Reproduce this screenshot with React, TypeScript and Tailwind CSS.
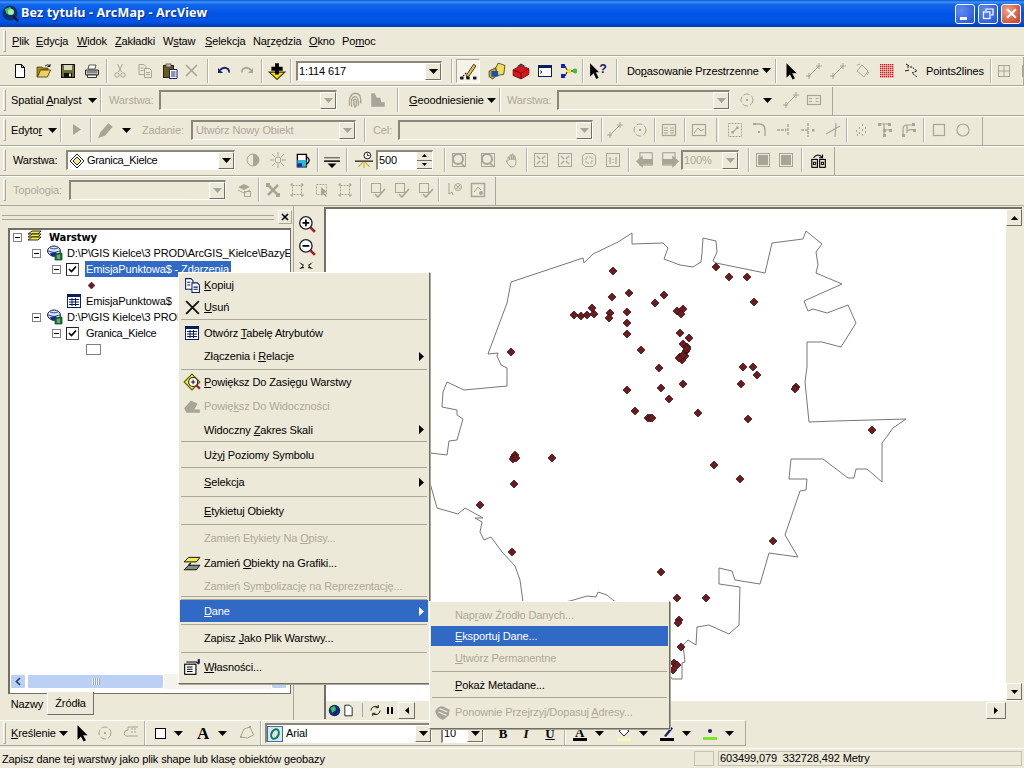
import type { ReactNode } from 'react';
import clsx from 'clsx';

const G = '#a8a596';

function Ic({ children, className }: { children: ReactNode; className?: string }) {
  return (
    <svg viewBox="0 0 16 16" fill="none" className={clsx('w-4 h-4 shrink-0', className)}>
      {children}
    </svg>
  );
}

function B({ children, className }: { children?: ReactNode; className?: string }) {
  return <div className={clsx('w-6 h-6 shrink-0 flex items-center justify-center', className)}>{children}</div>;
}

function Sep({ className }: { className?: string }) {
  return <div className={clsx('w-[2px] h-6 shrink-0 border-l border-[#b5b2a4] border-r-white border-r', className)} />;
}

function Grip() {
  return <div className="w-[3px] h-[22px] ml-[3px] shrink-0 border-l border-t border-white border-r border-b border-r-[#aca899] border-b-[#aca899]" />;
}

function Caret({ className, gray }: { className?: string; gray?: boolean }) {
  return (
    <svg viewBox="0 0 9 5" className={clsx('w-[9px] h-[5px] shrink-0', className)}>
      <polygon points="0,0 9,0 4.5,5" fill={gray ? G : '#000'} />
    </svg>
  );
}

function Combo({ className, disabled, children }: { className: string; disabled?: boolean; children?: ReactNode }) {
  return (
    <div
      className={clsx(
        'h-5 shrink-0 flex items-center border-t-2 border-l-2 border-t-[#8a8778] border-l-[#8a8778] border-b border-r border-b-white border-r-white',
        disabled ? 'bg-[#ece9d8]' : 'bg-white',
        className,
      )}
    >
      <div className="flex-1 min-w-0 flex items-center whitespace-nowrap">{children}</div>
      <div className="w-4 h-[17px] shrink-0 flex items-center justify-center bg-[#ece9d8] border-t border-l border-white border-r border-b border-r-[#716f64] border-b-[#716f64]">
        <Caret className="w-[7px] h-1" gray={disabled} />
      </div>
    </div>
  );
}

/* ---- icons ---- */
const IconNew = () => <Ic><path d="M3.5 1.5h6l3 3v10h-9z" fill="#fff" stroke="#000" /><path d="M9.5 1.5v3h3" stroke="#000" /></Ic>;
const IconOpen = () => <Ic><path d="M1 4h5l1 1h5v2H5l-3 7H1z" fill="#a88a1c" stroke="#3d3200" strokeWidth=".7" /><path d="M1.5 14l3-7h10l-3 7z" fill="#f0d060" stroke="#3d3200" strokeWidth=".8" /><path d="M9 3q2.5-2.5 5 0M14 1v2.5h-2.5" stroke="#1d1d1d" /></Ic>;
const IconSave = () => <Ic><rect x="1.5" y="1.5" width="13" height="13" fill="#70702c" stroke="#111" /><rect x="4" y="2" width="8" height="5" fill="#d8d8c8" /><rect x="4" y="10" width="8" height="4" fill="#111" /><rect x="9" y="10.5" width="2" height="3" fill="#ddd" /></Ic>;
const IconPrint = () => <Ic><path d="M4 6l1-4h7l-1 4z" fill="#fff" stroke="#333" strokeWidth=".8" /><path d="M1.5 7h13v5h-13z" fill="#bbb" stroke="#333" /><path d="M3.5 12h9v2.5h-9z" fill="#fff" stroke="#333" /><path d="M3 9h10" stroke="#555" /></Ic>;
const IconCut = () => <Ic><path d="M5.5 1l4 8M10.5 1l-4 8" stroke={G} /><circle cx="5" cy="12" r="2.2" stroke={G} /><circle cx="11" cy="12" r="2.2" stroke={G} /></Ic>;
const IconCopy = () => <Ic><path d="M2 1.5h5l2 2v8H2z" stroke={G} /><path d="M7.5 5.5h5l2 2v7h-7z" fill="#ece9d8" stroke={G} /><path d="M3.5 5h3M3.5 7.5h3M9 9.5h4M9 11.5h4" stroke={G} /></Ic>;
const IconPaste = () => <Ic><rect x="1.5" y="2.5" width="10" height="12" fill="#6d5a20" stroke="#2d2500" /><rect x="4" y="1" width="5" height="3" fill="#c9c7b9" stroke="#333" strokeWidth=".7" /><path d="M7.5 6.5h7.5v9H7.5z" fill="#fff" stroke="#17206b" /><path d="M9 9h4.5M9 11h4.5M9 13h4.5" stroke="#17206b" /></Ic>;
const IconDelete = () => <Ic><path d="M2 2l11 11M13 2L2 13" stroke={G} strokeWidth="1.6" /></Ic>;
const IconUndo = () => <Ic><path d="M4 7q4-4 8-1 1.5 1.500 1 3.500" stroke="#17206b" strokeWidth="1.8" /><path d="M2 5v5h5z" fill="#17206b" /></Ic>;
const IconRedo = () => <Ic><path d="M12 7Q8 3 4 6 2.500 7.500 3 9.500" stroke={G} strokeWidth="1.800" /><path d="M14 5v5H9z" fill={G} /></Ic>;
const IconAdd = () => <Ic className="w-[18px] h-[18px]"><path d="M8 15.500L1 9h14z" fill="#f4dd1e" stroke="#3d3200" /><path d="M6.300 1h3.400v3.300H13v3.400H9.700V11H6.300V7.700H3V4.300h3.300z" fill="#000" /></Ic>;
const IconEdit = () => <Ic className="w-[18px] h-[18px]"><path d="M7 11l6-9 2 1.500-6 9-2.500 1z" fill="#f4c430" stroke="#111" strokeWidth=".7" /><path d="M2 14.500L7 9" stroke="#111" strokeDasharray="1.500 1" /><rect x="1" y="13" width="3" height="2.500" fill="#111" /><rect x="6.500" y="13" width="3" height="2.500" fill="#111" /><rect x="12.500" y="13" width="3" height="2.500" fill="#111" /></Ic>;
const IconCatalog = () => <Ic className="w-[18px] h-[18px]"><path d="M1 8l6-3 1 7-4 3-3-2z" fill="#c9a91f" stroke="#333" strokeWidth=".7" /><path d="M7 5l2-4 6 2-1 8-6 1z" fill="#f3dd55" stroke="#333" strokeWidth=".7" /><rect x="3" y="8" width="6" height="5" fill="#1b4fb5" /></Ic>;
const IconToolbox = () => <Ic className="w-[18px] h-[18px]"><path d="M1 7l7-4 7 3v5l-7 4-7-3z" fill="#d9141c" stroke="#5d0509" strokeWidth=".7" /><path d="M1 7l7 3 7-4M8 10v5" stroke="#5d0509" strokeWidth=".8" /><path d="M5 4l3-2 3 1.500" stroke="#333" /></Ic>;
const IconCmd = () => <Ic><rect x="1.500" y="2.500" width="13" height="11" fill="#fff" stroke="#0a1e5e" /><rect x="1" y="2" width="14" height="3" fill="#0a1e5e" /><path d="M3 7.500l2 1.500-2 1.500" stroke="#000" strokeWidth=".8" /></Ic>;
const IconModel = () => <Ic><rect x="0" y="1" width="4" height="4" fill="#1420c8" /><rect x="0" y="11" width="4" height="4" fill="#1420c8" /><rect x="6" y="6" width="4" height="4" fill="#f2e21a" /><circle cx="14" cy="8" r="2.400" fill="#38c04a" /><path d="M4 3l2 4M4 13l2-4M10 8h2" stroke="#111" /></Ic>;
const IconHelp = () => <Ic className="w-[18px] h-[18px]"><path d="M1 1v12l3-3 2.500 5 2-1-2.500-5H9z" fill="#000" /><text x="9" y="10" fontSize="11" fontWeight="700" fill="#17206b" fontFamily="Liberation Sans">?</text></Ic>;
const IconArrow = ({ c = '#000' }: { c?: string }) => <Ic className="w-[18px] h-[18px]"><path d="M4 1v13l3-3 2.500 4.500 2-1L9 10h4z" fill={c} /></Ic>;
const IconVertex = () => <Ic><path d="M2 14L13 3" stroke={G} /><path d="M10 3h6M13 0v6M0 13h5M3 10v6" stroke={G} /></Ic>;
const IconRot = () => <Ic><circle cx="8" cy="8" r="6" stroke={G} strokeDasharray="6 2" /><rect x="7" y="7" width="2" height="2" fill={G} /></Ic>;
const IconDiam = () => <Ic><path d="M8 2l6 6-4 6-7-6z" stroke={G} /><path d="M3 2l3-1M13 12l2-3" stroke={G} /></Ic>;
function IconRedGrid() {
  const cells = [1, 3, 5, 7, 9, 11, 13];
  return (
    <Ic>
      {cells.flatMap((x) => cells.map((y) => <rect key={`${x}-${y}`} x={x} y={y} width="1.400" height="1.400" fill="#e0141c" />))}
    </Ic>
  );
}
const IconP2L = () => <Ic><path d="M2 4h5l5 4-5 2 5 4" stroke="#111" strokeDasharray="2 1" /><path d="M1 1l3 2M0 8l4-1" stroke="#111" /></Ic>;
const IconGrid = () => <Ic><rect x="2.500" y="2.500" width="11" height="11" stroke={G} /><path d="M8 3v10M3 8h10" stroke={G} /></Ic>;
const IconFinger = () => <Ic className="w-[18px] h-[18px]"><path d="M3 13Q2 3 8 2q6 0 5 9M5 14Q4 5 8 5q3.500 0 3 8M8 15q-1.500-4-1-7 1-1.500 2 0 .5 3 0 6" stroke={G} strokeWidth="1.200" /></Ic>;
const IconStairs = () => <Ic className="w-[18px] h-[18px]"><path d="M2 14V2h3l2 4h3l1 4h3v4z" fill={G} /></Ic>;
const IconMeasure = () => <Ic><rect x="1.500" y="3.500" width="13" height="9" stroke={G} strokeWidth="1.200" /><path d="M3 6.500h3M3 9.500h3M9.500 6.500h3M9.500 9.500h3" stroke={G} /></Ic>;
const IconTri = () => <Ic><path d="M4 2v11l8-5.500z" fill={G} /></Ic>;
const IconPencil = () => <Ic className="w-[18px] h-[18px]"><path d="M1 15l2-5L10 2l4 3-7 8z" fill={G} /></Ic>;
const IconAttr = () => <Ic><rect x="1.500" y="2.500" width="13" height="11" stroke={G} strokeWidth="1.200" /><path d="M3 6h4M3 8.500h4M3 11h4M9 6h4M9 8.500h4M9 11h4" stroke={G} /></Ic>;
const IconSketch = () => <Ic><rect x="1.500" y="2.500" width="13" height="11" stroke={G} strokeWidth="1.200" /><path d="M3 11l4-5 3 3 3-2" stroke={G} /></Ic>;
const IconScaleBox = () => <Ic><rect x="1.500" y="1.500" width="13" height="13" stroke={G} strokeDasharray="2 1" /><path d="M5 11l6-6M9 5h2v2M5 9v2h2" stroke={G} strokeWidth="1.200" /></Ic>;
const IconCurve = () => <Ic><path d="M2 2h5q6 0 6 6v6" stroke={G} strokeWidth="1.400" /><rect x="1" y="1" width="3" height="2" fill={G} /><rect x="6" y="9" width="2" height="2" fill={G} /></Ic>;
const IconSplit = () => <Ic><path d="M1 8h8M12 2v12" stroke={G} strokeWidth="1.400" strokeDasharray="3 1" /><path d="M9 6l2 2-2 2z" fill={G} /></Ic>;
const IconCross = () => <Ic><path d="M8 1v14M1 8h8" stroke={G} strokeWidth="1.400" strokeDasharray="3 1" /><rect x="12" y="7" width="2.500" height="2.500" fill={G} /></Ic>;
const IconCut2 = () => <Ic><path d="M1 12L15 4M11 1l-1 14" stroke={G} strokeWidth="1.200" /></Ic>;
const IconDots = () => <Ic><path d="M3 9h1M6 6h1M9 3h1M12 6h1M6 11h1M9 8h1M12 10h1M4 13h1M9 13h1" stroke={G} strokeWidth="2" /></Ic>;
const IconNodes = () => <Ic><path d="M2 2h10M7 2v6h6M7 8v6" stroke={G} strokeWidth="1.200" /><rect x="1" y="1" width="3" height="3" fill={G} /><rect x="11" y="1" width="3" height="3" fill={G} /><rect x="6" y="7" width="3" height="3" fill={G} /><rect x="12" y="7" width="3" height="3" fill={G} /><rect x="6" y="12" width="3" height="3" fill={G} /></Ic>;
const IconNodes2 = () => <Ic><path d="M2 14V7q0-4 4-4h4M10 3h3M6 3v8M6 9q3-2 8-1" stroke={G} strokeWidth="1.200" /><rect x="1" y="12" width="3" height="3" fill={G} /><rect x="11" y="1" width="3" height="3" fill={G} /><rect x="12" y="7" width="3" height="3" fill={G} /></Ic>;
const IconSquare = () => <Ic><rect x="2.500" y="2.500" width="11" height="11" stroke={G} strokeWidth="1.200" /></Ic>;
const IconCircle = () => <Ic><circle cx="8" cy="8" r="6" stroke={G} strokeWidth="1.200" /></Ic>;
const IconContrast = () => <Ic><circle cx="8" cy="8" r="6" stroke={G} /><path d="M8 2a6 6 0 010 12z" fill={G} /></Ic>;
const IconSun = () => <Ic><circle cx="8" cy="8" r="3" stroke={G} /><path d="M8 0v4M8 12v4M0 8h4M12 8h4M2 2l3 3M11 11l3 3M14 2l-3 3M5 11l-3 3" stroke={G} /></Ic>;
const IconCup = () => <Ic className="w-[18px] h-[18px]"><path d="M3 3h8v11H3z" fill="#fff" stroke="#000" strokeWidth="1.200" /><path d="M3 8h8v6H3z" fill="#2fb8c8" /><path d="M3 11h4v3H3z" fill="#1420c8" /><path d="M11 5q5 3 0 7" stroke="#000" strokeWidth="1.200" /></Ic>;
const IconLines = () => <Ic className="w-[18px] h-[18px]"><path d="M1 6h14" stroke="#555" /><path d="M1 9h14" stroke="#000" strokeWidth="1.300" /><path d="M4 11h8l-4 4z" fill="#000" /></Ic>;
const IconScale = () => <Ic className="w-[20px] h-[18px]"><path d="M0 9h16" stroke="#000" /><path d="M3 14l4-4M13 14l-4-4M8 10v5" stroke="#c9b82c" /><circle cx="11" cy="4" r="3" fill="#fff" stroke="#000" strokeWidth=".8" /><path d="M11 2v2h2" stroke="#000" strokeWidth=".7" /></Ic>;
const IconZoomBox = () => <Ic><circle cx="7" cy="7" r="5" stroke={G} strokeWidth="2" /><rect x="1.500" y="1.500" width="13" height="13" stroke={G} /><path d="M10 11l4 4" stroke={G} strokeWidth="1.600" /></Ic>;
const IconHand = () => <Ic><path d="M4 9V5l1 0 1 3V3h1l1 5V2h1l1 6V4h1l1 5q0 6-4 6H7Q4 13 2 9z" stroke={G} /></Ic>;
const IconFix = () => <Ic><rect x="1.500" y="1.500" width="13" height="13" stroke={G} /><path d="M4 4l3 3M12 4L9 7M4 12l3-3M12 12L9 9" stroke={G} strokeWidth="1.300" /></Ic>;
const IconFix2 = () => <Ic><rect x="1.500" y="1.500" width="13" height="13" stroke={G} /><path d="M7 7L4 4M9 9l3 3M9 7l3-3M7 9l-3 3" stroke={G} strokeWidth="1.300" /></Ic>;
const IconFix3 = () => <Ic><path d="M4 1.500h8l2.500 2.500v8L12 14.500H4L1.500 12V4z" stroke={G} /><path d="M5 5h6v6H5z" stroke={G} strokeDasharray="2 1" /></Ic>;
const IconOne = () => <Ic><rect x="1.500" y="1.500" width="13" height="13" stroke={G} /><path d="M5 5v7M11 5v7M8 7v1M8 10v1" stroke={G} strokeWidth="1.200" /></Ic>;
const IconBack = () => <Ic className="w-[18px] h-[18px]"><rect x="3.500" y="1.500" width="11" height="11" stroke={G} /><path d="M0 9l6-5v3h9v5H6v3z" fill={G} /></Ic>;
const IconFwd = () => <Ic className="w-[18px] h-[18px]"><rect x="1.500" y="1.500" width="11" height="11" stroke={G} /><path d="M16 9l-6-5v3H1v5h9v3z" fill={G} /></Ic>;
const IconPage = () => <Ic><rect x="1.500" y="1.500" width="13" height="13" stroke={G} /><rect x="3" y="3" width="10" height="10" fill={G} /></Ic>;
const IconBook = () => <Ic className="w-[18px] h-[18px]"><rect x="2.500" y="7.500" width="5" height="7" stroke="#000" /><rect x="9.500" y="7.500" width="5" height="7" stroke="#000" /><rect x="4" y="10" width="2" height="2" stroke="#000" strokeWidth=".8" /><rect x="11" y="10" width="2" height="2" stroke="#000" strokeWidth=".8" /><path d="M4 6q4-5 8 0M12 3v3h-3" stroke="#000" /></Ic>;
const IconTopo = () => <Ic><path d="M2 5l6-3 6 3-6 3z" fill={G} /><path d="M2 8l6 3 6-3" stroke={G} /><rect x="8.500" y="9.500" width="6" height="5" stroke={G} /></Ic>;
const IconTopoA = () => <Ic><path d="M3 3l10 10M13 3L3 13" stroke={G} strokeWidth="2.500" /><rect x="1" y="1" width="4" height="4" fill={G} /><rect x="11" y="11" width="4" height="4" fill={G} /></Ic>;
const IconTopoB = () => <Ic><rect x="3.500" y="3.500" width="9" height="9" stroke={G} strokeDasharray="2 1" /><path d="M1 3h3M12 3h3M1 13h3M12 13h3M3 1v3M13 1v3M3 12v3M13 12v3" stroke={G} /></Ic>;
const IconTopoC = () => <Ic><rect x="2.500" y="2.500" width="10" height="10" stroke={G} strokeDasharray="2 1" /><path d="M7 5v9l2-2 3 3 1-1-3-3 3-1z" fill={G} /></Ic>;
const IconCheckBox = () => <Ic><rect x="1.500" y="1.500" width="9" height="9" stroke={G} /><path d="M5 12l3 3 7-8" stroke={G} strokeWidth="1.600" /></Ic>;
const IconErr = () => <Ic><path d="M2 1v11l3-2 1 3" stroke={G} /><circle cx="11" cy="5" r="3.500" stroke={G} /><path d="M9 3l4 4M13 3L9 7" stroke={G} /></Ic>;
const IconErrBox = () => <Ic><rect x="1.500" y="1.500" width="13" height="13" stroke={G} strokeWidth="1.500" /><path d="M4 10l4-5 3 3" stroke={G} /><circle cx="11" cy="11" r="2" fill={G} /></Ic>;
const IconDraw = () => <Ic><path d="M1.500 12L5 4l6-2 3.500 8-6 3z" stroke={G} /><rect x="1" y="11" width="2" height="2" fill={G} /><rect x="10" y="1" width="2" height="2" fill={G} /></Ic>;
const IconGraph = () => <Ic><path d="M2 9a4 4 0 014-4V2h11v9H7a4 4 0 01-5-2z" stroke={G} /><path d="M9 4h2M12 4h2M9 7h2M12 7h2" stroke={G} /></Ic>;
const IconFontO = () => <Ic><rect x="0.500" y="0.500" width="15" height="15" fill="#d7e5f6" stroke="#3a6ea5" /><ellipse cx="8" cy="8" rx="3.500" ry="5" transform="rotate(25 8 8)" stroke="#0f7e3c" strokeWidth="2" /></Ic>;
const IconColorA = () => <Ic><text x="3" y="12" fontFamily="Liberation Serif" fontWeight="700" fontSize="13" fill="#000">A</text><rect x="1" y="13" width="14" height="3" fill="#000" /></Ic>;
const IconFill = () => <Ic><path d="M3 6l5-4 5 4-5 5z" fill="#fff" stroke="#17206b" /><rect x="1" y="13" width="14" height="3" fill="#f8f6b0" /></Ic>;
const IconLineCol = () => <Ic><path d="M5 11l7-9 2 1.500L7 12z" fill="#17206b" /><rect x="1" y="13" width="14" height="3" fill="#000" /></Ic>;
const IconMarker = () => <Ic><circle cx="8" cy="6" r="2" fill="#17206b" /><rect x="1" y="12" width="14" height="3" fill="#7ce62a" /></Ic>;

const IconLayers = () => <Ic><path d="M1 5l4-3h9l-3 3z" fill="#f4ec4a" stroke="#000" strokeWidth=".8" /><path d="M1 8l4-3h9l-3 3z" fill="#f4ec4a" stroke="#000" strokeWidth=".8" /><path d="M1 11l4-3h9l-3 3z" fill="#f4ec4a" stroke="#000" strokeWidth=".8" /></Ic>;
const IconDb = () => <Ic><ellipse cx="7" cy="6" rx="6.500" ry="5" fill="#dfe6f2" stroke="#14204f" /><path d="M1 6q6 3 12 0M3 3q4 2 8 0" stroke="#2f4fa0" /><path d="M3 8l6-1 1 2-3 3-3-1z" fill="#17308c" /><path d="M8 9l7-1v7H8z" fill="#1c7a36" stroke="#0c3318" strokeWidth=".7" /><path d="M10 11h3M10 13h3" stroke="#e9f6e9" strokeWidth=".8" /></Ic>;
const IconTable = () => <Ic><rect x="1.500" y="1.500" width="13" height="13" fill="#fff" stroke="#0a1e5e" /><rect x="1" y="1" width="14" height="3" fill="#0a1e5e" /><path d="M3 6.500h10M3 9h10M3 11.500h10M6 5v8M9.500 5v8" stroke="#0a1e5e" /></Ic>;
const IconZoomLayer = () => <Ic className="w-[18px] h-[18px]"><path d="M8 1l7 7-7 7-7-7z" fill="#f2f03a" stroke="#5d5a00" /><circle cx="9" cy="8" r="4" fill="#fff" stroke="#222" /><path d="M7 8h4M9 6v4" stroke="#222" /><path d="M12 11l3 3" stroke="#a01c28" strokeWidth="2" /></Ic>;
const IconZoomVis = () => <Ic className="w-[18px] h-[18px]"><path d="M1 10l6-7 6 3-3 5h5v3H3z" fill={G} /></Ic>;
const IconGraphics = () => <Ic className="w-[18px] h-[18px]"><path d="M1 7l4-4h10l-3 4z" fill="#f4ec4a" stroke="#000" strokeWidth=".8" /><path d="M1 14l4-4h10l-3 4z" fill="#8a8a80" stroke="#000" strokeWidth=".8" /><path d="M7 8l-2 2" stroke="#000" /></Ic>;
const IconProps = () => <Ic className="w-[18px] h-[18px]"><rect x="1.500" y="5.500" width="10" height="9" fill="#fff" stroke="#000" /><path d="M3 3.500h9l2 2" stroke="#000" /><path d="M3.500 8h5M3.500 10h5M3.500 12h5" stroke="#000" /><path d="M13 1h2v4h-2z" fill="#17206b" /></Ic>;
const IconReview = () => <Ic className="w-[18px] h-[18px]"><path d="M1 7q3-5 7-4l6 3-1 5-5 4q-6-2-7-8z" fill={G} /><path d="M4 8l7 3M5 5l7 3" stroke="#ece9d8" /></Ic>;

function ZoomIcon({ minus }: { minus?: boolean }) {
  return (
    <Ic className="w-[18px] h-[18px]">
      <circle cx="7" cy="7" r="5.500" fill="#fff" stroke="#222" strokeWidth="1.200" />
      <path d="M4 7h6" stroke="#000" strokeWidth="1.600" />
      {!minus && <path d="M7 4v6" stroke="#000" strokeWidth="1.600" />}
      <path d="M11 11l4 4" stroke="#a01c28" strokeWidth="2.400" />
    </Ic>
  );
}

function Dis({ className, children }: { className?: string; children: ReactNode }) {
  return <span className={clsx('text-[#aca899] whitespace-nowrap shrink-0', className)}>{children}</span>;
}

function Label({ className, children }: { className?: string; children: ReactNode }) {
  return <span className={clsx('whitespace-nowrap shrink-0', className)}>{children}</span>;
}

function Band({ className, children }: { className: string; children: ReactNode }) {
  return (
    <div className="h-[30px] border-t border-white border-b border-b-[#aca899] flex">
      <div className={clsx('h-full flex items-center border-r border-r-[#aca899] overflow-hidden', className)}>{children}</div>
    </div>
  );
}

/* ---- map data ---- */
const boundary =
  '632,233 632,244 663,243 668,248 664,259 680,265 693,267 701,262 702,253 703,238 716,241 717,252 713,261 716,263 765,273 772,243 803,239 806,231 822,244 816,252 818,265 816,273 842,284 804,301 808,311 813,309 827,313 848,305 856,323 841,347 822,342 807,342 807,367 805,382 809,422 835,421 906,419 893,428 888,435 882,443 882,482 867,469 856,469 854,478 848,478 823,459 791,459 789,479 807,479 806,490 800,491 785,535 798,557 769,553 760,584 735,580 732,571 719,568 719,584 740,587 739,625 729,634 709,625 697,627 696,645 688,640 683,645 685,662 682,663 682,679 672,679 660,660 660,610 614,601 607,595 598,592 596,597 587,596 570,601 540,606 523,602 520,580 515,566 502,552 491,537 484,540 480,532 482,522 475,518 483,518 465,508 458,514 437,508 430,483 428,470 430,453 447,455 449,441 457,440 463,419 457,415 457,410 442,407 443,392 447,382 464,390 507,386 507,368 501,365 497,356 498,353 488,354 507,303 511,282 583,258 584,263 593,254 618,242';

const dots: [number, number][] = [
  [613, 271], [629, 293], [612, 297], [664, 295], [655, 303], [592, 308], [574, 315], [581, 316], [587, 315], [594, 314],
  [610, 313], [609, 318], [627, 312], [627, 323], [627, 334], [677, 311], [683, 309], [681, 314], [680, 333], [689, 338],
  [641, 350], [511, 352], [659, 368], [683, 384], [661, 388], [627, 390], [669, 399], [635, 411], [698, 413],
  [648, 418], [650, 418], [652, 418], [683, 344], [687, 347], [686, 351], [687, 349], [680, 357], [685, 356], [682, 360], [679, 358], [683, 355],
  [716, 267], [729, 277], [747, 277], [754, 302], [743, 367], [753, 367], [757, 375], [741, 384], [796, 387], [795, 389],
  [748, 419], [872, 430], [514, 457], [515, 455], [513, 459], [516, 458], [552, 458], [714, 465], [740, 479], [514, 484], [480, 505],
  [773, 541], [512, 552], [661, 572], [677, 598], [706, 598], [679, 620], [678, 623], [681, 647], [674, 663], [677, 665], [673, 670],
];

/* ---- context menu ---- */
type Item = { h: string; label?: ReactNode; icon?: ReactNode; arrow?: boolean; disabled?: boolean; active?: boolean };

const layerMenu: Item[] = [
  { h: 'h-[22px]', label: <><u>K</u>opiuj</>, icon: <Ic className="w-[17px] h-[17px]"><path d="M1.500 1.500h5l2 2v8h-7z" fill="#fff" stroke="#0a1e5e" /><path d="M7.500 5.500h5l2 2v7h-7z" fill="#fff" stroke="#0a1e5e" /><path d="M3 5h3M3 7.500h3M9 9.500h4M9 11.500h4" stroke="#0a1e5e" /></Ic> },
  { h: 'h-[22px]', label: <><u>U</u>suń</>, icon: <Ic className="w-[17px] h-[17px]"><path d="M2 2l12 12M14 2L2 14" stroke="#111" strokeWidth="1.700" /></Ic> },
  { h: 'h-[3px]' },
  { h: 'h-[23px]', label: <>Otwórz <u>T</u>abelę Atrybutów</>, icon: <IconTable /> },
  { h: 'h-[24px]', label: <>Złączenia i <u>R</u>elacje</>, arrow: true },
  { h: 'h-[3px]' },
  { h: 'h-[22px]', label: <><u>P</u>owiększ Do Zasięgu Warstwy</>, icon: <IconZoomLayer /> },
  { h: 'h-[26px]', label: <>Powię<u>k</u>sz Do Widoczności</>, icon: <IconZoomVis />, disabled: true },
  { h: 'h-[21px]', label: <>Widoczny <u>Z</u>akres Skali</>, arrow: true },
  { h: 'h-[3px]' },
  { h: 'h-[23px]', label: <>Uż<u>y</u>j Poziomy Symbolu</> },
  { h: 'h-[3px]' },
  { h: 'h-[26px]', label: <><u>S</u>elekcja</>, arrow: true },
  { h: 'h-[3px]' },
  { h: 'h-[25px]', label: <><u>E</u>tykietuj Obiekty</> },
  { h: 'h-[3px]' },
  { h: 'h-[24px]', label: <>Zamień Etykiety Na <u>O</u>pisy...</>, disabled: true },
  { h: 'h-[26px]', label: <>Zamień <u>O</u>biekty na Grafiki...</>, icon: <IconGraphics /> },
  { h: 'h-[19px]', label: <>Zamień Sym<u>b</u>olizację na Reprezentację...</>, disabled: true },
  { h: 'h-[3px]' },
  { h: 'h-[2px] !border-0' },
  { h: 'h-[22px]', label: <><u>D</u>ane</>, arrow: true, active: true },
  { h: 'h-[4px]' },
  { h: 'h-[24px]', label: <>Zapisz <u>J</u>ako Plik Warstwy...</> },
  { h: 'h-[4px]' },
  { h: 'h-[25px]', label: <><u>W</u>łasności...</>, icon: <IconProps /> },
];

const dataMenu: Item[] = [
  { h: 'h-[23px]', label: <>Nap<u>r</u>aw Źródło Danych...</>, disabled: true },
  { h: 'h-[20px]', label: <><u>E</u>ksportuj Dane...</>, active: true },
  { h: 'h-[24px]', label: <><u>U</u>twórz Permanentne</>, disabled: true },
  { h: 'h-[3px]' },
  { h: 'h-[23px]', label: <><u>P</u>okaż Metadane...</> },
  { h: 'h-[3px]' },
  { h: 'h-[26px]', label: <>Ponownie Przejrzyj/Dopasuj <u>A</u>dresy...</>, icon: <IconReview />, disabled: true },
];

function Menu({ items, className }: { items: Item[]; className: string }) {
  return (
    <div className={clsx('absolute bg-[#ece9d8] border border-t-white border-l-white border-r-[#716f64] border-b-[#716f64] px-[1px] pt-[1px] shadow-[1px_1px_0_#aca899]', className)}>
      {items.map((it, i) =>
        it.label ? (
          <div
            key={i}
            className={clsx(
              'flex items-center whitespace-nowrap',
              it.h,
              it.active ? 'bg-[#316ac5] text-white' : it.disabled ? 'text-[#aca899]' : 'text-black',
            )}
          >
            <div className="w-6 shrink-0 flex justify-center">{it.icon}</div>
            <span className="flex-1 pt-[1px]">{it.label}</span>
            {it.arrow && (
              <svg viewBox="0 0 5 9" className="w-[5px] h-[9px] mr-1 shrink-0">
                <polygon points="0,0 5,4.500 0,9" fill={it.active ? '#fff' : '#000'} />
              </svg>
            )}
          </div>
        ) : (
          <div key={i} className={clsx('flex items-center', it.h)}>
            <div className="w-full mx-[1px] border-t border-t-[#aca899]" />
          </div>
        ),
      )}
    </div>
  );
}

/* ---- tree bits ---- */
function Exp({ className }: { className?: string }) {
  return (
    <div className={clsx('w-[9px] h-[9px] shrink-0 border border-[#808080] bg-white flex items-center justify-center', className)}>
      <div className="w-[5px] h-px bg-black" />
    </div>
  );
}

function Check({ className }: { className?: string }) {
  return (
    <div className={clsx('w-[13px] h-[13px] shrink-0 border border-[#555] border-t-[#222] border-l-[#222] bg-white flex items-center justify-center', className)}>
      <svg viewBox="0 0 9 9" className="w-[9px] h-[9px]"><path d="M1 4l2.500 2.500L8 1.500" stroke="#000" strokeWidth="1.700" fill="none" /></svg>
    </div>
  );
}

function Row({ className, children }: { className?: string; children: ReactNode }) {
  return <div className={clsx('h-4 flex items-center whitespace-nowrap', className)}>{children}</div>;
}

function ScrollBtn({ children, className }: { children: ReactNode; className?: string }) {
  return (
    <div className={clsx('w-[17px] h-[17px] shrink-0 flex items-center justify-center bg-[#ece9d8] border border-t-white border-l-white border-r-[#716f64] border-b-[#716f64]', className)}>
      {children}
    </div>
  );
}

export default function App() {
  return (
    <div className="w-[1024px] h-[768px] relative overflow-hidden bg-[#ece9d8] text-black text-[11px] tracking-[-0.12px] leading-none font-['Liberation_Sans',sans-serif]">
      {/* title bar */}
      <div className="h-[27px] flex items-center bg-[linear-gradient(180deg,#0a55d8_0%,#3f94f6_8%,#1467ea_16%,#0055e5_50%,#0154e4_80%,#0546c0_92%,#003dab_100%)]">
        <svg viewBox="0 0 18 18" className="w-[18px] h-[18px] ml-[2px] shrink-0">
          <circle cx="8" cy="8" r="7.500" fill="#12306e" />
          <path d="M3 4l5-2 3 4-4 4-3-2z" fill="#3cc45a" />
          <circle cx="9" cy="7" r="3" fill="#a8f0a8" />
          <path d="M11 11l5 5" stroke="#1a1a30" strokeWidth="2.500" />
        </svg>
        <span className="ml-[1px] text-white font-bold text-[12.5px] tracking-[0.15px] [text-shadow:1px_1px_0_#0b2f8f] font-['Noto_Sans',sans-serif] whitespace-nowrap">Bez tytułu - ArcMap - ArcView</span>
        <div className="flex-1" />
        <div className="flex gap-[3px] mr-[3px]">
          <div className="w-5 h-5 rounded-[3px] border border-white bg-[radial-gradient(circle_at_30%_30%,#5f8cf0,#2352d8)] flex items-end pl-[4px] pb-[3px]">
            <div className="w-[7px] h-[3px] bg-white" />
          </div>
          <div className="w-5 h-5 rounded-[3px] border border-white bg-[radial-gradient(circle_at_30%_30%,#5f8cf0,#2352d8)] flex items-center justify-center">
            <svg viewBox="0 0 12 12" className="w-3 h-3"><path d="M4 3V1h7v6H8.500" stroke="#fff" strokeWidth="1.200" fill="none" /><rect x="1.500" y="4" width="6.500" height="6.500" stroke="#fff" strokeWidth="1.200" fill="none" /></svg>
          </div>
          <div className="w-5 h-5 rounded-[3px] border border-white bg-[radial-gradient(circle_at_30%_30%,#f0a088,#c8391a)] flex items-center justify-center">
            <svg viewBox="0 0 12 12" className="w-[13px] h-[13px]"><path d="M2 2l8 8M10 2l-8 8" stroke="#fff" strokeWidth="2" /></svg>
          </div>
        </div>
      </div>

      {/* menu bar */}
      <div className="h-[29px] flex items-center border-b border-b-[#aca899]">
        <Grip />
        <Label className="ml-[6px] w-[24px]"><u>P</u>lik</Label>
        <Label className="w-[41px]"><u>E</u>dycja</Label>
        <Label className="w-[38px]"><u>W</u>idok</Label>
        <Label className="w-[48px]"><u>Z</u>akładki</Label>
        <Label className="w-[42px]">W<u>s</u>taw</Label>
        <Label className="w-[48px]"><u>S</u>elekcja</Label>
        <Label className="w-[56px]">Na<u>r</u>zędzia</Label>
        <Label className="w-[33px]"><u>O</u>kno</Label>
        <Label>Po<u>m</u>oc</Label>
      </div>

      {/* toolbar 1 */}
      <Band className="w-full pb-[1px]">
        <B className="ml-[8px]"><IconNew /></B>
        <B><IconOpen /></B>
        <B><IconSave /></B>
        <B><IconPrint /></B>
        <Sep className="ml-[2px]" />
        <B><IconCut /></B>
        <B className="ml-[1px]"><IconCopy /></B>
        <B className="ml-[1px]"><IconPaste /></B>
        <B className="-ml-[2px]"><IconDelete /></B>
        <Sep className="ml-[3px]" />
        <B className="ml-[3px]"><IconUndo /></B>
        <B className="-ml-[1px]"><IconRedo /></B>
        <Sep className="ml-[2px]" />
        <B className="ml-[2px]"><IconAdd /></B>
        <Sep className="ml-[1px]" />
        <Combo className="ml-[4px] w-[146px]"><span className="pl-[1px]">1:114 617</span></Combo>
        <Sep className="ml-[9px]" />
        <B className="ml-[3px] bg-[#f5f3ea] border border-t-[#aca899] border-l-[#aca899] border-r-white border-b-white"><IconEdit /></B>
        <B className="ml-[5px]"><IconCatalog /></B>
        <B><IconToolbox /></B>
        <B><IconCmd /></B>
        <B><IconModel /></B>
        <Sep className="ml-[1px]" />
        <B className="ml-[2px]"><IconHelp /></B>
        <Sep className="ml-[6px]" />
        <Label className="ml-[9px] w-[130px] pt-[1px]">Do<u>p</u>asowanie Przestrzenne</Label>
        <Caret className="ml-[5px]" />
        <Sep className="ml-[4px]" />
        <B className="ml-[2px]"><IconArrow /></B>
        <B className="-ml-[1px]"><IconVertex /></B>
        <B><IconVertex /></B>
        <B><IconDiam /></B>
        <B className="ml-[1px]"><IconRedGrid /></B>
        <B className="ml-[2px]"><IconP2L /></B>
        <Label className="ml-[1px] w-[57px] pt-[1px]">Points2lines</Label>
        <Sep className="ml-[7px]" />
        <B><IconGrid /></B>
        <B><IconGrid /></B>
      </Band>

      {/* toolbar 2 */}
      <Band className="w-[833px] pb-[2px]">
        <Grip />
        <Label className="ml-[5px] w-[71px]">Spatial <u>A</u>nalyst</Label>
        <Caret className="ml-[6px]" />
        <Sep className="ml-[3px]" />
        <Dis className="ml-[7px] w-[44px]">Warstwa:</Dis>
        <Combo className="ml-[6px] w-[178px]" disabled />
        <B className="ml-[6px]"><IconFinger /></B>
        <B className="-ml-[1px]"><IconStairs /></B>
        <Sep className="ml-[7px]" />
        <Label className="ml-[10px] w-[72px]"><u>G</u>eoodniesienie</Label>
        <Caret className="ml-[6px]" />
        <Sep className="ml-[3px]" />
        <Dis className="ml-[6px] w-[45px]">Warstwa:</Dis>
        <Combo className="ml-[5px] w-[173px]" disabled />
        <B className="ml-[5px]"><IconRot /></B>
        <Caret className="ml-[4px]" />
        <B className="ml-[7px]"><IconVertex /></B>
        <B className="-ml-[1px]"><IconMeasure /></B>
      </Band>

      {/* toolbar 3 */}
      <Band className="w-[983px] pb-[2px]">
        <Grip />
        <Label className="ml-[5px] w-[33px]">Edyto<u>r</u></Label>
        <Caret className="ml-[4px]" />
        <Sep className="ml-[3px]" />
        <B className="ml-[3px]"><IconTri /></B>
        <Sep className="ml-[1px]" />
        <B className="ml-[2px]"><IconPencil /></B>
        <Caret className="ml-[4px]" />
        <Dis className="ml-[11px] w-[41px]">Zadanie:</Dis>
        <Combo className="ml-[8px] w-[165px]" disabled><span className="pl-[3px] text-[#aca899]">Utwórz Nowy Obiekt</span></Combo>
        <Sep className="ml-[8px]" />
        <Dis className="ml-[7px] w-[18px]">Cel:</Dis>
        <Combo className="ml-[7px] w-[195px]" disabled />
        <Sep className="ml-[8px]" />
        <B><IconVertex /></B>
        <B className="ml-[1px]"><IconRot /></B>
        <Sep className="ml-[2px]" />
        <B className="ml-[1px]"><IconAttr /></B>
        <Sep className="ml-[3px]" />
        <B className="ml-[1px]"><IconSketch /></B>
        <Sep className="ml-[5px] w-[3px]" />
        <B className="ml-[4px]"><IconScaleBox /></B>
        <B className="ml-[1px]"><IconCurve /></B>
        <B><IconSplit /></B>
        <B><IconCross /></B>
        <B className="ml-[1px]"><IconCut2 /></B>
        <Sep className="ml-[1px]" />
        <B className="ml-[1px]"><IconDots /></B>
        <B><IconNodes /></B>
        <B><IconNodes2 /></B>
        <Sep className="ml-[2px]" />
        <B className="ml-[2px]"><IconSquare /></B>
        <B><IconCircle /></B>
      </Band>

      {/* toolbar 4 */}
      <Band className="w-[835px] pb-[2px]">
        <Grip />
        <Label className="ml-[7px] w-[45px]">Warstwa:</Label>
        <Combo className="ml-[8px] w-[169px]">
          <svg viewBox="0 0 16 16" className="w-4 h-4 ml-[1px] shrink-0"><path d="M8 1l7 7-7 7-7-7z" fill="#fff" stroke="#222" /><path d="M8 4l4 4-4 4-4-4z" stroke="#222" fill="#f2e9a0" /></svg>
          <span className="ml-[2px] tracking-[-0.3px]">Granica_Kielce</span>
        </Combo>
        <B className="ml-[6px]"><IconContrast /></B>
        <B className="ml-[1px]"><IconSun /></B>
        <B className="ml-[1px]"><IconCup /></B>
        <Sep className="ml-[2px]" />
        <B className="ml-[1px]"><IconLines /></B>
        <Sep className="ml-[2px]" />
        <B className="ml-[4px]"><IconScale /></B>
        <div className="w-[57px] h-5 shrink-0 flex items-center bg-white border-t-2 border-l-2 border-t-[#8a8778] border-l-[#8a8778] border-b border-r border-b-white border-r-white">
          <span className="flex-1 pl-[1px]">500</span>
          <div className="w-[15px] h-full flex flex-col bg-[#ece9d8]">
            <div className="flex-1 flex items-center justify-center border-b border-b-[#716f64]"><svg viewBox="0 0 5 3" className="w-[5px] h-[3px]"><polygon points="2.500,0 5,3 0,3" /></svg></div>
            <div className="flex-1 flex items-center justify-center border-b border-b-[#716f64]"><svg viewBox="0 0 5 3" className="w-[5px] h-[3px]"><polygon points="0,0 5,0 2.500,3" /></svg></div>
          </div>
        </div>
        <Sep className="ml-[11px]" />
        <B className="ml-[1px]"><IconZoomBox /></B>
        <B className="ml-[5px]"><IconZoomBox /></B>
        <B><IconHand /></B>
        <Sep className="ml-[2px]" />
        <B className="ml-[1px]"><IconFix /></B>
        <B><IconFix2 /></B>
        <B><IconFix3 /></B>
        <B><IconOne /></B>
        <Sep className="ml-[3px]" />
        <B className="ml-[3px]"><IconBack /></B>
        <B className="ml-[1px]"><IconFwd /></B>
        <Combo className="-ml-[1px] w-[58px]" disabled><span className="pl-[1px] text-[#aca899]">100%</span></Combo>
        <Sep className="ml-[9px]" />
        <B className="ml-[1px]"><IconPage /></B>
        <B className="-ml-[1px]"><IconPage /></B>
        <Sep className="ml-[3px]" />
        <B className="ml-[3px]"><IconBook /></B>
      </Band>

      {/* toolbar 5 */}
      <Band className="w-[496px] pb-[2px]">
        <Grip />
        <Dis className="ml-[7px] w-[49px]">Topologia:</Dis>
        <Combo className="ml-[7px] w-[157px]" disabled />
        <B className="ml-[6px]"><IconTopo /></B>
        <Sep className="ml-[2px]" />
        <B className="ml-[1px]"><IconTopoA /></B>
        <B><IconTopoB /></B>
        <B className="ml-[1px]"><IconTopoC /></B>
        <B className="-ml-[1px]"><IconTopoB /></B>
        <Sep className="ml-[3px]" />
        <B className="ml-[4px]"><IconCheckBox /></B>
        <B><IconCheckBox /></B>
        <B><IconCheckBox /></B>
        <Sep />
        <B className="ml-[3px]"><IconErr /></B>
        <B className="-ml-[1px]"><IconErrBox /></B>
      </Band>

      {/* main area */}
      <div className="h-[514px] flex">
        {/* table of contents */}
        <div className="w-[293px] shrink-0 flex flex-col">
          <div className="h-[22px] flex items-center pl-[2px] pr-[1px]">
            <div className="flex-1 h-[5px] border-t border-b border-t-[#aca899] border-b-[#aca899] mr-[4px]" />
            <div className="w-[14px] h-[14px] flex items-center justify-center border border-t-white border-l-white border-r-[#aca899] border-b-[#aca899]">
              <svg viewBox="0 0 8 8" className="w-2 h-2"><path d="M1 1l6 6M7 1L1 7" stroke="#000" strokeWidth="1.700" /></svg>
            </div>
          </div>
          <div className="ml-[8px] mr-[2px] h-[466px] flex flex-col bg-white border-t-2 border-l-2 border-t-[#716f64] border-l-[#716f64] border-r border-b border-r-[#716f64] border-b-[#716f64] overflow-hidden">
            <div className="flex-1 -mt-[1px] text-black overflow-hidden">
              <Row>
                <Exp className="ml-[3px]" />
                <div className="ml-[5px]"><IconLayers /></div>
                <span className="ml-[6px] pt-[1px] font-bold font-['DejaVu_Sans',sans-serif] text-[10px] leading-none">Warstwy</span>
              </Row>
              <Row>
                <Exp className="ml-[22px]" />
                <div className="ml-[6px]"><IconDb /></div>
                <span className="ml-[4px]">D:\P\GIS Kielce\3 PROD\ArcGIS_Kielce\BazyE</span>
              </Row>
              <Row>
                <Exp className="ml-[42px]" />
                <Check className="ml-[5px]" />
                <span className="ml-[6px] bg-[#316ac5] text-white h-[16px] flex items-center pl-[1px] pr-[2px]">EmisjaPunktowa$ - Zdarzenia</span>
              </Row>
              <Row>
                <svg viewBox="0 0 7 7" className="w-[7px] h-[7px] ml-[78px]"><polygon points="3.500,0 7,3.500 3.500,7 0,3.500" fill="#6b1a1e" stroke="#222" strokeWidth=".5" /></svg>
              </Row>
              <Row>
                <div className="ml-[56px]"><IconTable /></div>
                <span className="ml-[4px]">EmisjaPunktowa$</span>
              </Row>
              <Row>
                <Exp className="ml-[22px]" />
                <div className="ml-[6px]"><IconDb /></div>
                <span className="ml-[4px]">D:\P\GIS Kielce\3 PROD\ArcGIS_Kielce\BazyE</span>
              </Row>
              <Row>
                <Exp className="ml-[42px]" />
                <Check className="ml-[5px]" />
                <span className="ml-[7px] tracking-[-0.3px]">Granica_Kielce</span>
              </Row>
              <Row>
                <div className="w-[15px] h-[11px] ml-[76px] border border-[#808080] bg-white" />
              </Row>
            </div>
            {/* tree scrollbar */}
            <div className="h-[15px] shrink-0 mb-[4px] flex">
              <div className="w-[16px] rounded-[2px] bg-[#bcd0f4] border border-white flex items-center justify-center">
                <svg viewBox="0 0 6 9" className="w-[6px] h-[9px]"><path d="M5 1L1.500 4.500 5 8" stroke="#22408a" strokeWidth="1.700" fill="none" /></svg>
              </div>
              <div className="w-[137px] ml-[1px] rounded-[2px] bg-[#bcd0f4] border border-white flex items-center justify-center">
                <div className="w-[8px] h-[7px] bg-[repeating-linear-gradient(90deg,#eef3fc_0_1px,#90a8d8_1px_2px)]" />
              </div>
              <div className="flex-1 bg-[#f4f3ee]" />
              <div className="w-[16px] mr-[3px] rounded-[2px] bg-[#bcd0f4] border border-white" />
            </div>
          </div>
          <div className="ml-[8px] h-[22px] flex items-start">
            <div className="w-[38px] h-[20px] flex items-center justify-center">Nazwy</div>
            <div className="w-[47px] h-[23px] -mt-[2px] ml-[1px] flex items-center justify-center bg-[#ece9d8] border-r border-b border-r-[#716f64] border-b-[#716f64] border-l border-l-white">Źródła</div>
          </div>
        </div>

        {/* tools column */}
        <div className="w-[31px] shrink-0 border-l border-l-[#aca899] flex flex-col items-start pl-[4px] pt-[9px]">
          <ZoomIcon />
          <div className="mt-[5px]"><ZoomIcon minus /></div>
          <svg viewBox="0 0 16 8" className="w-4 h-2 mt-[5px]"><path d="M1 1l5 3-1 1zM15 1l-5 3 1 1zM1 8l4-3 1 2zM15 8l-4-3-1 2z" fill="#000" /></svg>
        </div>

        {/* map */}
        <div className="flex-1 min-w-0 mt-[1px] mr-[2px] h-[512px] border-t-2 border-l-2 border-t-[#716f64] border-l-[#716f64] flex flex-col">
          <div className="flex h-[491px]">
            <svg viewBox="326 209 680 491" className="w-[680px] h-[491px] bg-white shrink-0">
              <polygon points={boundary} fill="none" stroke="#777" strokeWidth="1" />
              {dots.map(([x, y], i) => (
                <polygon key={i} points={`${x},${y - 4} ${x + 4},${y} ${x},${y + 4} ${x - 4},${y}`} fill="#701a20" stroke="#2a1010" strokeWidth=".7" />
              ))}
            </svg>
            <div className="flex-1 flex flex-col items-center justify-between">
              <ScrollBtn className="w-full">
                <svg viewBox="0 0 7 4" className="w-[7px] h-1"><polygon points="3.500,0 7,4 0,4" /></svg>
              </ScrollBtn>
              <ScrollBtn className="w-full">
                <svg viewBox="0 0 7 4" className="w-[7px] h-1"><polygon points="0,0 7,0 3.500,4" /></svg>
              </ScrollBtn>
            </div>
          </div>
          <div className="flex flex-1 items-center border-t border-t-white">
            <svg viewBox="0 0 16 16" className="w-[13px] h-[13px] ml-[2px]"><circle cx="8" cy="8" r="7" fill="#0f2a7a" /><path d="M3 5l5-3 2 5-5 4z" fill="#3cc45a" /></svg>
            <Ic className="w-[13px] h-[13px] ml-[1px]"><path d="M3.500 1.500h6l3 3v10h-9z" fill="#fff" stroke="#000" /></Ic>
            <div className="ml-[7px] w-px h-[14px] bg-[#aca899]" />
            <svg viewBox="0 0 14 14" className="w-[13px] h-[13px] ml-[6px]"><path d="M2 7a5 5 0 018-3.500M12 7a5 5 0 01-8 3.500" stroke="#111" fill="none" /><path d="M10 1v3H7M4 13v-3h3" stroke="#111" fill="none" /></svg>
            <div className="ml-[5px] w-[6px] h-[7px] border-l-2 border-r-2 border-black" />
            <ScrollBtn className="ml-[5px] w-[15px]">
              <svg viewBox="0 0 4 7" className="w-1 h-[7px]"><polygon points="4,0 4,7 0,3.500" /></svg>
            </ScrollBtn>
            <div className="flex-1" />
            <ScrollBtn className="w-[20px] mr-[16px]">
              <svg viewBox="0 0 4 7" className="w-1 h-[7px]"><polygon points="0,0 4,3.500 0,7" /></svg>
            </ScrollBtn>
          </div>
        </div>
      </div>

      {/* drawing toolbar */}
      <div className="h-[28px] flex items-start">
        <div className="w-[746px] h-[26px] flex items-center border-t border-t-white border-r border-r-[#aca899] border-b border-b-[#aca899]">
          <Grip />
          <Label className="ml-[5px] w-[43px]"><u>K</u>reślenie</Label>
          <Caret className="ml-[5px]" />
          <B className="ml-[2px]"><IconArrow /></B>
          <B className="-ml-[1px]"><IconRot /></B>
          <B className="ml-[1px]"><IconGraph /></B>
          <Sep className="ml-[2px]" />
          <B className="ml-[2px]"><div className="w-[11px] h-[11px] bg-white border border-black" /></B>
          <Caret className="ml-[2px]" />
          <B className="ml-[8px]"><span className="font-['Liberation_Serif',serif] font-bold text-[17px]">A</span></B>
          <Caret className="ml-[3px]" />
          <B className="ml-[8px]"><IconDraw /></B>
          <Sep className="ml-[1px]" />
          <Combo className="ml-[3px] w-[167px]"><IconFontO /><span className="ml-[3px]">Arial</span></Combo>
          <Combo className="ml-[9px] w-[43px]"><span className="pl-[1px]">10</span></Combo>
          <B className="ml-[7px]"><span className="font-['Liberation_Serif',serif] font-bold text-[13px]">B</span></B>
          <B className="-ml-[1px]"><span className="font-['Liberation_Serif',serif] italic font-bold text-[13px]">I</span></B>
          <B><span className="font-['Liberation_Serif',serif] font-bold underline text-[13px]">U</span></B>
          <Sep className="ml-[2px]" />
          <B className="ml-[2px]"><IconColorA /></B>
          <Caret className="ml-[3px]" />
          <B className="ml-[8px]"><IconFill /></B>
          <Caret className="ml-[3px]" />
          <B className="ml-[7px]"><IconLineCol /></B>
          <Caret className="ml-[3px]" />
          <B className="ml-[7px]"><IconMarker /></B>
          <Caret className="ml-[3px]" />
        </div>
      </div>

      {/* status bar */}
      <div className="h-[20px] flex items-start pt-[2px] pl-[2px] border-t border-t-white">
        <span className="w-[692px] pt-[3px] whitespace-nowrap">Zapisz dane tej warstwy jako plik shape lub klasę obiektów geobazy</span>
        <div className="w-[20px] h-[15px] border border-[#c5c2b2]" />
        <div className="ml-[4px] w-[304px] h-[15px] flex items-center border border-[#c5c2b2] pl-[1px]">603499,079&nbsp;&nbsp;332728,492 Metry</div>
      </div>

      {/* context menus */}
      <Menu items={layerMenu} className="left-[178px] top-[272px] w-[252px] h-[412px]" />
      <Menu items={dataMenu} className="left-[429px] top-[601px] w-[241px] h-[128px]" />
    </div>
  );
}
